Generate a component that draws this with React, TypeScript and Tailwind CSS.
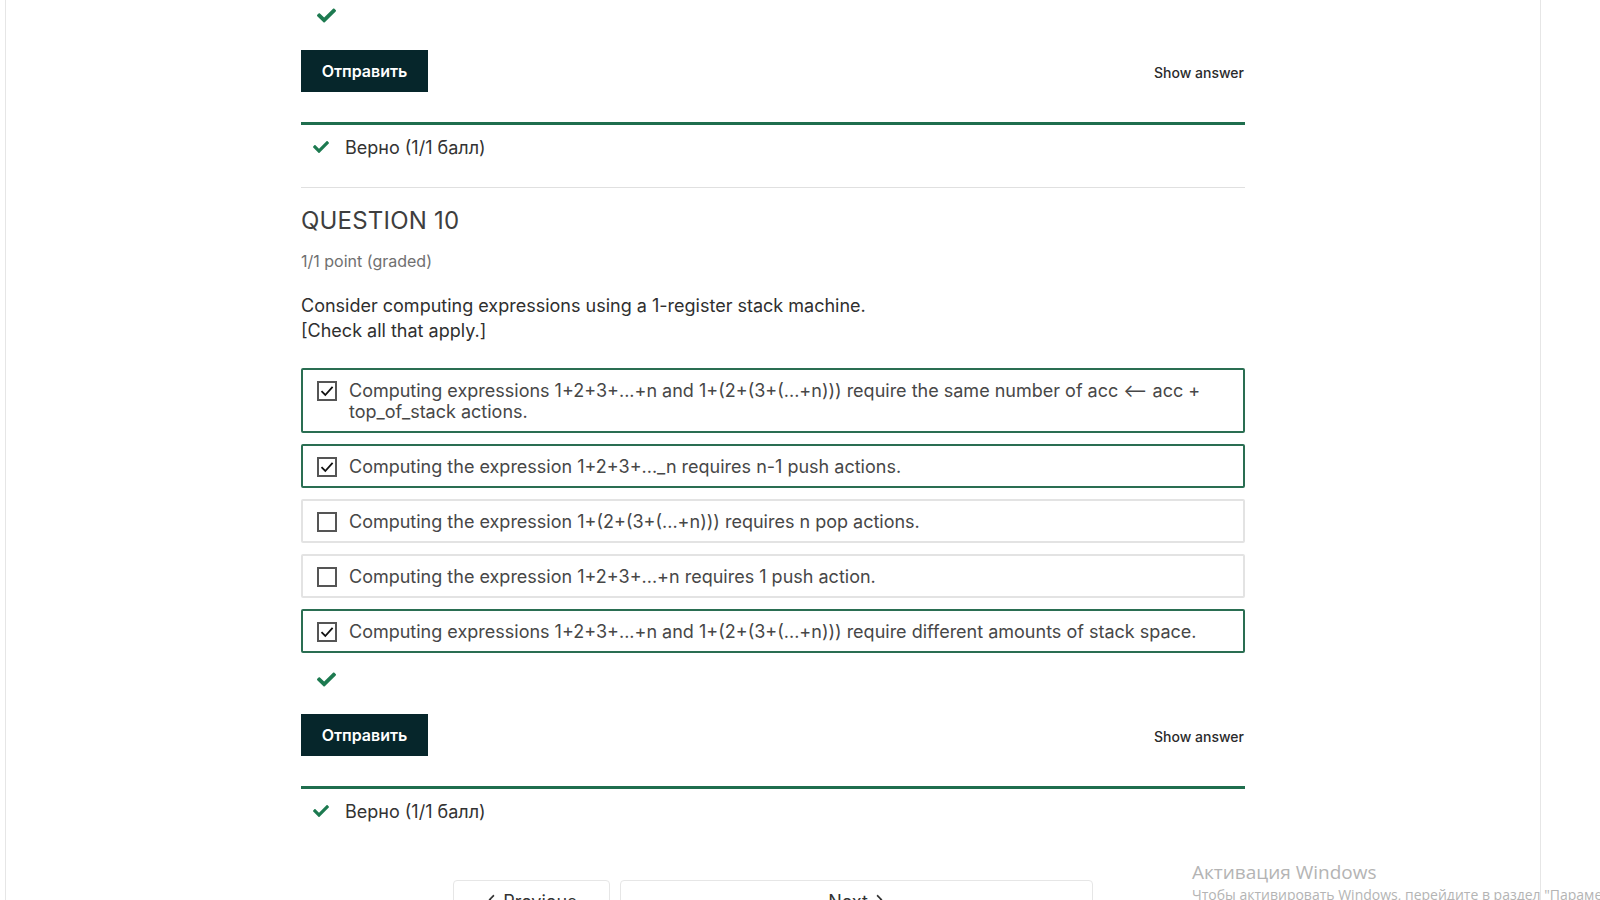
import React from "react";
import { FaCheck, FaChevronLeft, FaChevronRight } from "react-icons/fa";

const GREEN = "#1d7a50";

function Check({ className = "" }: { className?: string }) {
  return <FaCheck className={className} style={{ color: GREEN }} />;
}

function Box({ checked }: { checked: boolean }) {
  return (
    <span className="flex h-[20px] w-[20px] shrink-0 items-center justify-center border-2 border-[#555] bg-white">
      {checked && (
        <svg width="16" height="16" viewBox="0 0 16 16">
          <path d="M2.5 8.2 L6.3 12 L13.6 3.8" fill="none" stroke="#111" strokeWidth="1.8" />
        </svg>
      )}
    </span>
  );
}

function Option({ checked, text }: { checked: boolean; text: string }) {
  return (
    <div
      className={
        "flex items-start gap-[12px] rounded-[2px] border-2 px-[14px] py-[9.5px] " +
        (checked ? "border-[#2a6e52]" : "border-[#e3e3e3]")
      }
    >
      <span className="pt-[1px]">
        <Box checked={checked} />
      </span>
      <span className="text-[18px] leading-[21px] text-[#474747]">{text}</span>
    </div>
  );
}

function SubmitRow() {
  return (
    <div className="flex items-center justify-between">
      <button className="h-[42px] w-[127px] bg-[#06262b] text-[16px] font-semibold text-white">
        Отправить
      </button>
      <span className="pr-[1px] pt-[2px] text-[14px] font-medium text-[#2b2b2b]">Show answer</span>
    </div>
  );
}

function Result() {
  return (
    <div className="border-t-[3px] border-[#1f6e4e]">
      <div className="flex h-[44px] items-center gap-[16px] pl-[12px]">
        <Check className="h-[16px] w-[16px]" />
        <span className="text-[18px] text-[#333]">Верно (1/1 балл)</span>
      </div>
    </div>
  );
}

export default function App() {
  const options = [
    {
      checked: true,
      text: "Computing expressions 1+2+3+...+n and 1+(2+(3+(...+n))) require the same number of acc \u27F5 acc + top_of_stack actions.",
    },
    { checked: true, text: "Computing the expression 1+2+3+..._n requires n-1 push actions." },
    { checked: false, text: "Computing the expression 1+(2+(3+(...+n))) requires n pop actions." },
    { checked: false, text: "Computing the expression 1+2+3+...+n requires 1 push action." },
    {
      checked: true,
      text: "Computing expressions 1+2+3+...+n and 1+(2+(3+(...+n))) require different amounts of stack space.",
    },
  ];
  return (
    <div
      className="relative h-[900px] overflow-hidden bg-white"
      style={{ fontFamily: "Inter, 'Noto Sans', sans-serif" }}
    >
      <div className="ml-[5px] h-[900px] w-[1536px] border-x border-[#e6e6e6]">
        <div className="mx-auto w-[944px]">
          <div className="flex h-[30px] items-center pl-[16px]">
            <Check className="h-[19px] w-[19px]" />
          </div>
          <div className="mt-[20px]">
            <SubmitRow />
          </div>
          <div className="mt-[30px]">
            <Result />
          </div>
          <div className="mt-[18px] border-t border-[#e0e0e0]" />
          <h2 className="mt-[18px] text-[24px] font-normal leading-[30px] tracking-[0.2px] text-[#3e3e3e]">
            QUESTION 10
          </h2>
          <div className="mt-[15px] text-[16px] leading-[20px] text-[#707070]">1/1 point (graded)</div>
          <div className="mt-[22px] text-[18px] leading-[25px] text-[#2f2f2f]">
            <p>Consider computing expressions using a 1-register stack machine.</p>
            <p>[Check all that apply.]</p>
          </div>
          <div className="mt-[25px] flex flex-col gap-[11px]">
            {options.map((o, i) => (
              <Option key={i} checked={o.checked} text={o.text} />
            ))}
          </div>
          <div className="flex h-[52px] items-center pl-[16px]">
            <Check className="h-[19px] w-[19px]" />
          </div>
          <div className="mt-[9px]">
            <SubmitRow />
          </div>
          <div className="mt-[30px]">
            <Result />
          </div>
          <div className="mt-[47px] ml-[152px] flex gap-[10px]">
            <div className="flex h-[50px] w-[157px] items-start justify-center gap-[6px] rounded-[4px] border border-[#e6e6e6] pt-[7px] text-[18px] text-[#333]">
              <FaChevronLeft className="mt-[6px] h-[11px] w-[11px]" />
              <span>Previous</span>
            </div>
            <div className="flex h-[50px] w-[473px] items-start justify-center gap-[6px] rounded-[4px] border border-[#e6e6e6] pt-[7px] text-[18px] text-[#333]">
              <span>Next</span>
              <FaChevronRight className="mt-[6px] h-[11px] w-[11px]" />
            </div>
          </div>
        </div>
      </div>
      <div
        className="absolute left-[1192px] top-[860px] whitespace-nowrap text-[#b4b4b4]"
        style={{ fontFamily: "'Open Sans', 'Noto Sans', sans-serif" }}
      >
        <div className="text-[19px] leading-[25px]">Активация Windows</div>
        <div className="text-[14px] leading-[20px]">
          Чтобы активировать Windows, перейдите в раздел "Параметры".
        </div>
      </div>
    </div>
  );
}
